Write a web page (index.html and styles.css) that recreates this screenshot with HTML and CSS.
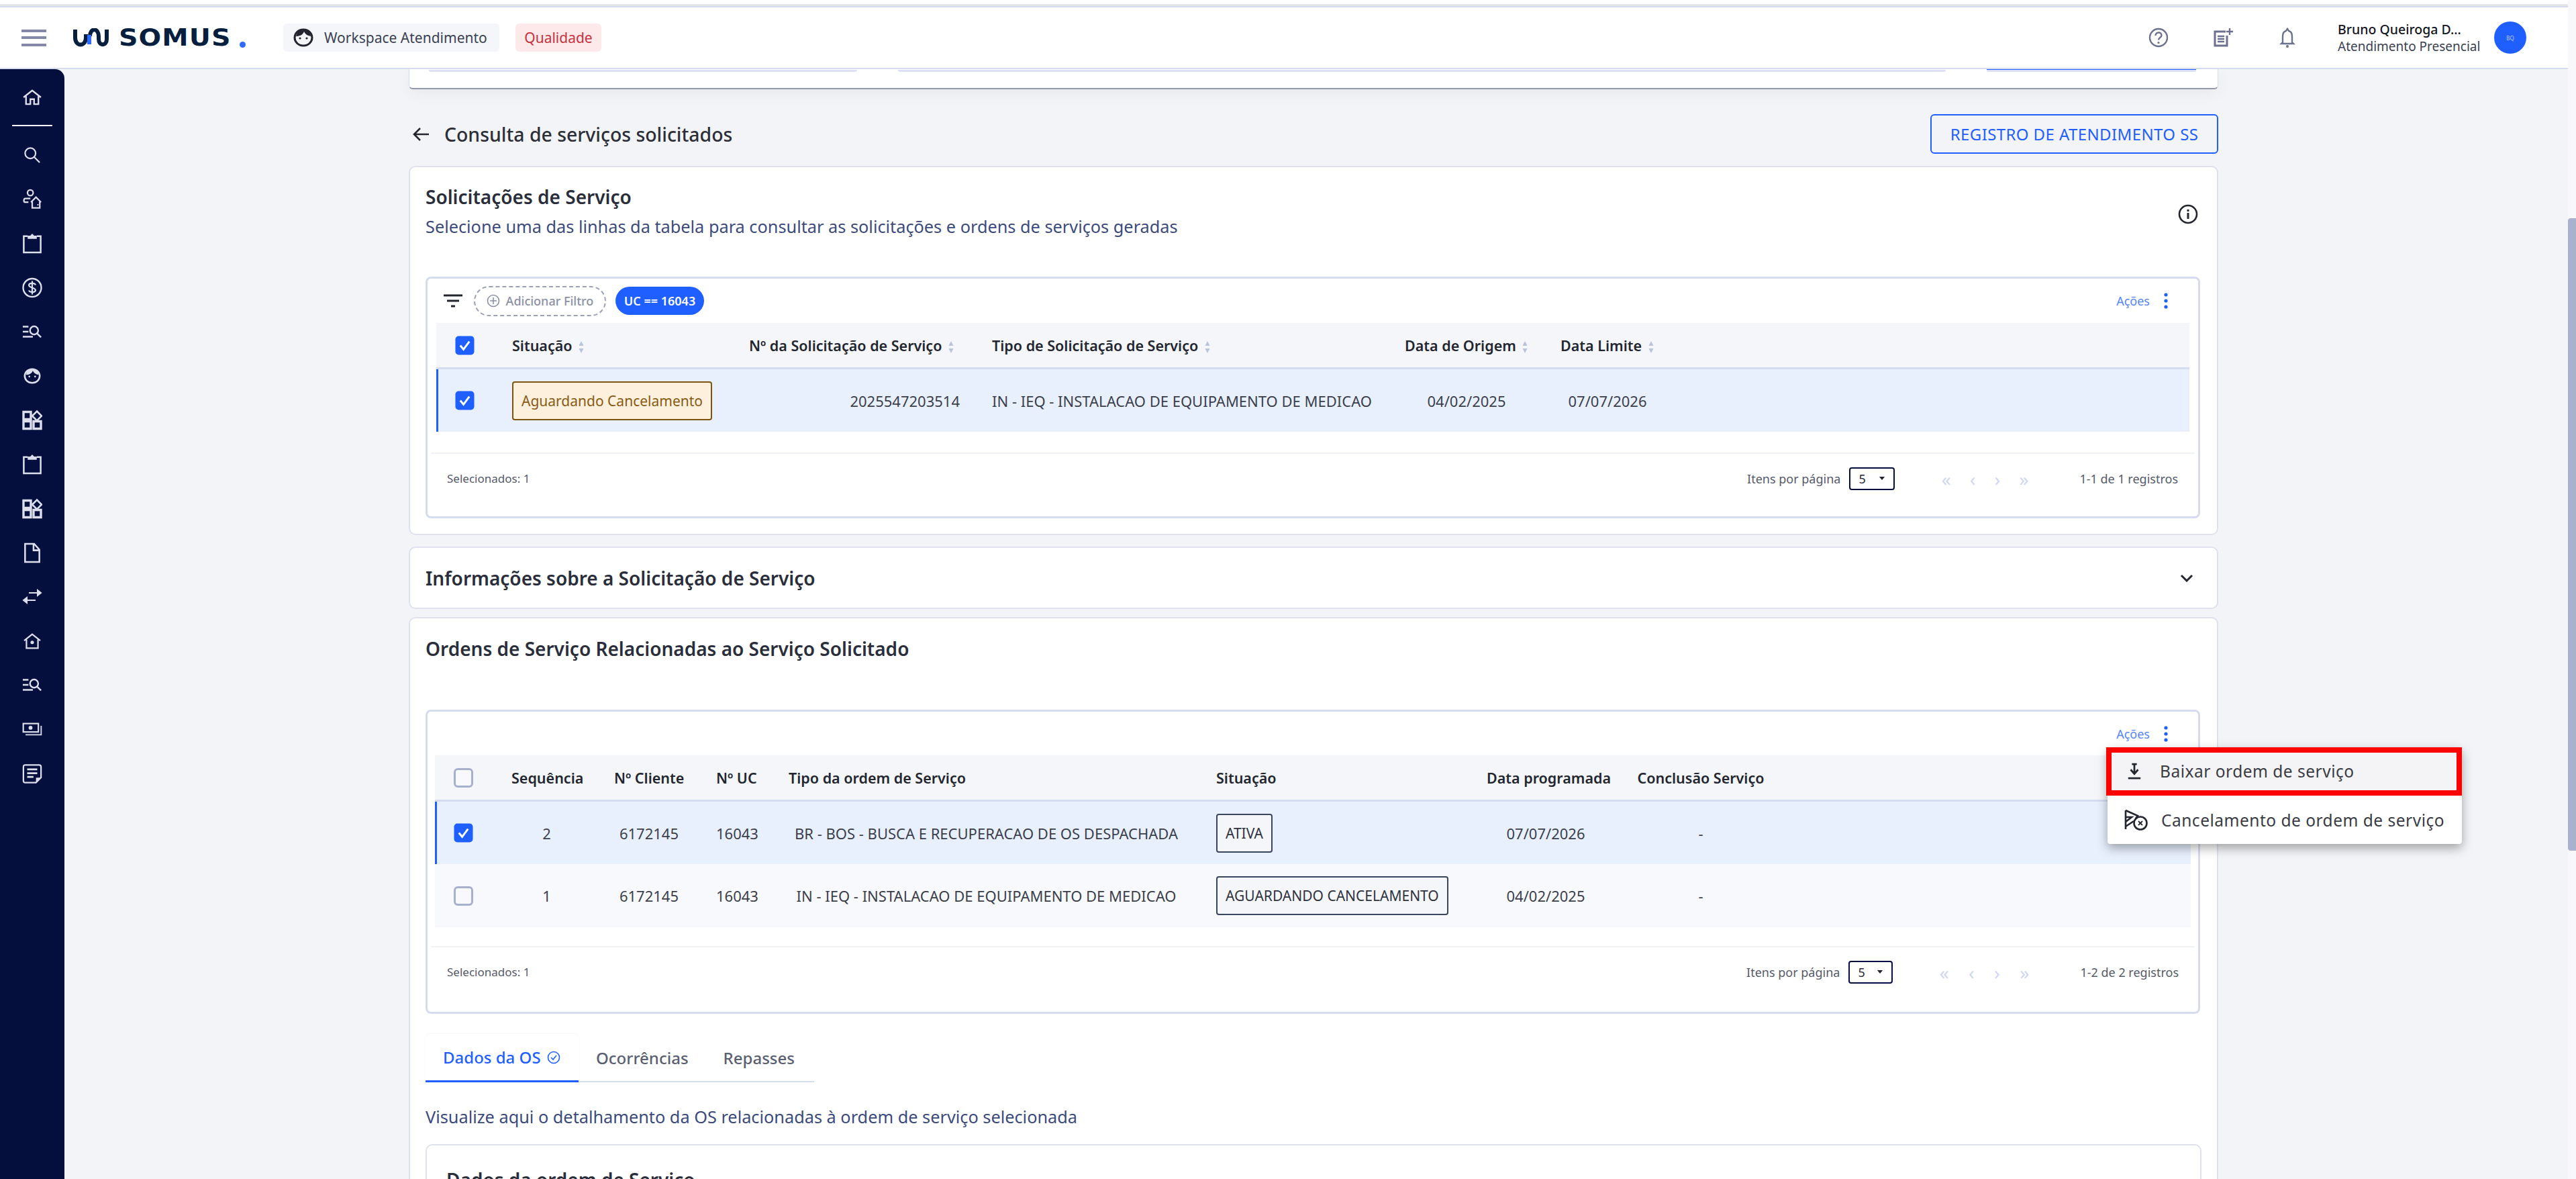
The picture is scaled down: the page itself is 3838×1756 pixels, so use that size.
FILE: index.html
```html
<!DOCTYPE html>
<html lang="pt-BR">
<head>
    <meta charset="UTF-8">
    <title>Somus - Consulta de serviços solicitados</title>
    <link rel="stylesheet" href="styles.css">
</head>
<body>
    <svg class="defs" width="0" height="0">
        <symbol id="i-clip" viewBox="0 0 30 32"><path d="M8 5H2v25h26V5h-6" fill="none" stroke="currentColor" stroke-width="2.6"/><path d="M8 9V4h4l3-3 3 3h4v5z" fill="currentColor"/></symbol>
        <symbol id="i-apps" viewBox="0 0 30 30"><path d="M2 3h11v11H2zM2 17h11v11H2zM17 17h11v11H17z" fill="none" stroke="currentColor" stroke-width="3.4"/><path d="M22 2l7 7-7 7-7-7z" fill="none" stroke="currentColor" stroke-width="2.6"/></symbol>
        <symbol id="i-lists" viewBox="0 0 32 22"><path d="M1 3h9M1 11h9M1 19h16" stroke="currentColor" stroke-width="2.6" fill="none"/><circle cx="19" cy="9" r="6.5" fill="none" stroke="currentColor" stroke-width="2.6"/><path d="M24 14l6 6" stroke="currentColor" stroke-width="2.6"/></symbol>
        <symbol id="i-face" viewBox="0 0 30 28"><path d="M15 2C7 2 2 8 2 14s5 12 13 12 13-6 13-12S23 2 15 2z" fill="none" stroke="currentColor" stroke-width="3"/><path d="M4 12c6 0 10-2 12-7 2 4 5 6 10 7l-1-6-6-4h-8L6 6z" fill="currentColor"/><circle cx="10" cy="15" r="1.6" fill="currentColor"/><circle cx="20" cy="15" r="1.6" fill="currentColor"/></symbol>
        <symbol id="i-sort" viewBox="0 0 8 20"><path d="M4 1l3.500 7H.5zM4 19l3.500-7H.5z" fill="currentColor"/></symbol>
        <symbol id="i-dots" viewBox="0 0 6 24"><circle cx="3" cy="3" r="2.6" fill="currentColor"/><circle cx="3" cy="12" r="2.6" fill="currentColor"/><circle cx="3" cy="21" r="2.6" fill="currentColor"/></symbol>
        <symbol id="i-check" viewBox="0 0 30 30"><rect width="29" height="29" x="0.5" y="0.5" rx="5" fill="currentColor"/><path d="M8 15l5 6 9-12" fill="none" stroke="#fff" stroke-width="3"/></symbol>
        <symbol id="i-caret" viewBox="0 0 12 8"><path d="M1 1h10L6 7z" fill="currentColor"/></symbol>
    </svg>

    <div class="shell">
        <div class="page">
            <div class="strip"></div>
            <header class="topbar">
                <button class="burger"><span></span><span></span><span></span></button>
                <div class="logo">
                    <svg class="logo-mark" viewBox="0 0 54 28"><path d="M4 2v12c0 14 16 14 16 0V9" fill="none" stroke="#071f3f" stroke-width="6"/><path d="M26 12c0-13 13-13 13 0v4c0 11 12 11 12 0V2" fill="none" stroke="#071f3f" stroke-width="6"/><path d="M25 10v14" stroke="#2f6bff" stroke-width="6"/></svg>
                    <span class="logo-word">SOMUS</span>
                    <span class="logo-dot"></span>
                </div>
                <div class="chip chip-work">
                    <svg class="chip-icon"><use href="#i-face"/></svg>
                    Workspace Atendimento
                </div>
                <div class="chip chip-qual">Qualidade</div>
                <div class="top-actions">
                    <svg class="top-icon" viewBox="0 0 30 30"><circle cx="15" cy="15" r="13" fill="none" stroke="currentColor" stroke-width="2.4"/><path d="M10.5 12c0-6 9-6 9-.5 0 3.500-4.500 3.500-4.500 7" fill="none" stroke="currentColor" stroke-width="2.4"/><circle cx="15" cy="22.500" r="1.600" fill="currentColor"/></svg>
                    <svg class="top-icon" viewBox="0 0 30 30"><path d="M19 6H3v21h18V12" fill="none" stroke="currentColor" stroke-width="3"/><path d="M7 13h10M7 17h10M7 21h10" stroke="currentColor" stroke-width="2.400"/><path d="M25 1v10M20 6h10" stroke="currentColor" stroke-width="2.400"/></svg>
                    <svg class="top-icon" viewBox="0 0 30 30"><path d="M15 2l2 3c4 1 5 4 5 8v9l2 2H6l2-2v-9c0-4 1-7 5-8z" fill="none" stroke="currentColor" stroke-width="2.400"/><circle cx="15" cy="28" r="2" fill="currentColor"/></svg>
                </div>
                <div class="user">
                    <div class="user-name">Bruno Queiroga D...</div>
                    <div class="user-role">Atendimento Presencial</div>
                </div>
                <div class="avatar">BQ</div>
            </header>

            <div class="body">
                <nav class="sidebar">
                    <div class="nav-home">
                        <svg class="nav-icon" viewBox="0 0 30 26"><path d="M1 13L15 2l14 11M5 11v13h7v-8h6v8h7V11" fill="none" stroke="currentColor" stroke-width="2.600"/></svg>
                    </div>
                    <div class="nav-line"></div>
                    <div class="nav-item"><svg class="nav-icon" viewBox="0 0 28 26"><circle cx="11" cy="10" r="8.500" fill="none" stroke="currentColor" stroke-width="2.400"/><path d="M17 16l9 9" stroke="currentColor" stroke-width="2.400"/></svg></div>
                    <div class="nav-item"><svg class="nav-icon nav-tall" viewBox="0 0 32 32"><circle cx="13" cy="6" r="4.500" fill="none" stroke="currentColor" stroke-width="2.400"/><path d="M13 15H5c-3 0-3 6 0 6h5" fill="none" stroke="currentColor" stroke-width="2.400"/><path d="M14 21l8-8 8 8M16 20v10h12V20" fill="none" stroke="currentColor" stroke-width="2.400"/><rect x="24" y="24" width="2" height="2" fill="currentColor"/></svg></div>
                    <div class="nav-item"><svg class="nav-icon nav-tall"><use href="#i-clip"/></svg></div>
                    <div class="nav-item"><svg class="nav-icon nav-tall" viewBox="0 0 30 30"><circle cx="15" cy="15" r="13.500" fill="none" stroke="currentColor" stroke-width="2.400"/><path d="M20 11c-1-3-9-4-10 0 0 5 10 3 10 8-1 4-9 3-10 0M15 5v20" fill="none" stroke="currentColor" stroke-width="2.200"/></svg></div>
                    <div class="nav-item"><svg class="nav-icon"><use href="#i-lists"/></svg></div>
                    <div class="nav-item"><svg class="nav-icon"><use href="#i-face"/></svg></div>
                    <div class="nav-item"><svg class="nav-icon nav-tall"><use href="#i-apps"/></svg></div>
                    <div class="nav-item"><svg class="nav-icon nav-tall"><use href="#i-clip"/></svg></div>
                    <div class="nav-item"><svg class="nav-icon nav-tall"><use href="#i-apps"/></svg></div>
                    <div class="nav-item"><svg class="nav-icon nav-tall" viewBox="0 0 26 32"><path d="M2 2h14l8 9v19H2zM15 2v10h9" fill="none" stroke="currentColor" stroke-width="2.600"/></svg></div>
                    <div class="nav-item"><svg class="nav-icon" viewBox="0 0 30 22"><path d="M10 5h18M23 1l5 4-5 4z" fill="currentColor" stroke="currentColor" stroke-width="2"/><path d="M20 16H2M7 12l-5 4 5 4z" fill="currentColor" stroke="currentColor" stroke-width="2"/></svg></div>
                    <div class="nav-item"><svg class="nav-icon" viewBox="0 0 30 28"><path d="M1 13L15 2l14 11M5 11v15h20V11" fill="none" stroke="currentColor" stroke-width="2.600"/><circle cx="15" cy="16" r="3" fill="currentColor"/></svg></div>
                    <div class="nav-item"><svg class="nav-icon"><use href="#i-lists"/></svg></div>
                    <div class="nav-item"><svg class="nav-icon" viewBox="0 0 36 24"><rect x="2" y="2" width="27" height="15" fill="none" stroke="currentColor" stroke-width="2.600"/><circle cx="15" cy="9.500" r="3.500" fill="currentColor"/><path d="M6 22h28V6" fill="none" stroke="currentColor" stroke-width="2.200"/></svg></div>
                    <div class="nav-item"><svg class="nav-icon nav-tall" viewBox="0 0 32 32"><path d="M22 30H5c-2 0-3-1-3-3V5c0-2 1-3 3-3h22c2 0 3 1 3 3v17z" fill="none" stroke="currentColor" stroke-width="2.400"/><path d="M8 9h16M8 15h16M8 21h10" stroke="currentColor" stroke-width="3"/><path d="M22 22h8l-8 8z" fill="currentColor"/></svg></div>
                </nav>

                <main class="main">
                    <div class="stub-card">
                        <div class="stub-input stub-a"></div>
                        <div class="stub-input stub-b"></div>
                        <div class="stub-input stub-btn"></div>
                    </div>

                    <div class="page-head">
                        <div class="page-title">
                            <svg class="back-icon" viewBox="0 0 26 22"><path d="M25 11H3M12 2l-9 9 9 9" fill="none" stroke="currentColor" stroke-width="2.600"/></svg>
                            Consulta de serviços solicitados
                        </div>
                        <button class="btn-outline">REGISTRO DE ATENDIMENTO SS</button>
                    </div>

                    <section class="card card-requests">
                        <div class="card-head">
                            <div>
                                <h2 class="card-title">Solicitações de Serviço</h2>
                                <p class="card-sub">Selecione uma das linhas da tabela para consultar as solicitações e ordens de serviços geradas</p>
                            </div>
                            <svg class="info-icon" viewBox="0 0 30 30"><circle cx="15" cy="15" r="13" fill="none" stroke="currentColor" stroke-width="2.600"/><path d="M15 13v9M15 8v3" stroke="currentColor" stroke-width="3"/></svg>
                        </div>

                        <div class="tbl-card tbl-one">
                            <div class="tbl-tools">
                                <svg class="filter-icon" viewBox="0 0 28 20"><path d="M0 2h28M5 10h18M11 18h6" stroke="currentColor" stroke-width="3"/></svg>
                                <div class="filter-add">
                                    <svg class="plus-icon" viewBox="0 0 20 20"><circle cx="10" cy="10" r="8.500" fill="none" stroke="currentColor" stroke-width="1.600"/><path d="M10 5v10M5 10h10" stroke="currentColor" stroke-width="1.600"/></svg>
                                    Adicionar Filtro
                                </div>
                                <div class="filter-chip">UC == 16043</div>
                                <div class="actions">Ações <svg class="dots-icon"><use href="#i-dots"/></svg></div>
                            </div>
                            <div class="row row-head">
                                <div class="cell-check"><svg class="check on"><use href="#i-check"/></svg></div>
                                <div>Situação <svg class="sort"><use href="#i-sort"/></svg></div>
                                <div>Nº da Solicitação de Serviço <svg class="sort"><use href="#i-sort"/></svg></div>
                                <div>Tipo de Solicitação de Serviço <svg class="sort"><use href="#i-sort"/></svg></div>
                                <div>Data de Origem <svg class="sort"><use href="#i-sort"/></svg></div>
                                <div>Data Limite <svg class="sort"><use href="#i-sort"/></svg></div>
                            </div>
                            <div class="row row-selected">
                                <div class="cell-check"><svg class="check on"><use href="#i-check"/></svg></div>
                                <div><span class="badge badge-warn">Aguardando Cancelamento</span></div>
                                <div class="cell-right">2025547203514</div>
                                <div>IN - IEQ - INSTALACAO DE EQUIPAMENTO DE MEDICAO</div>
                                <div class="cell-center">04/02/2025</div>
                                <div class="cell-center">07/07/2026</div>
                            </div>
                            <div class="tbl-foot">
                                <span class="selected-count">Selecionados: 1</span>
                                <span class="per-page">Itens por página</span>
                                <div class="select">5 <svg class="caret"><use href="#i-caret"/></svg></div>
                                <div class="pager"><span>«</span><span>‹</span><span>›</span><span>»</span></div>
                                <span class="range">1-1 de 1 registros</span>
                            </div>
                        </div>
                    </section>

                    <section class="card card-info">
                        <h2 class="card-title">Informações sobre a Solicitação de Serviço</h2>
                        <svg class="chevron" viewBox="0 0 20 12"><path d="M2 2l8 8 8-8" fill="none" stroke="currentColor" stroke-width="3"/></svg>
                    </section>

                    <section class="card card-orders">
                        <h2 class="card-title title-orders">Ordens de Serviço Relacionadas ao Serviço Solicitado</h2>

                        <div class="tbl-card tbl-two">
                            <div class="tbl-tools">
                                <div class="actions">Ações <svg class="dots-icon"><use href="#i-dots"/></svg></div>
                            </div>
                            <div class="row row-head">
                                <div class="cell-check"><span class="check off"></span></div>
                                <div>Sequência</div>
                                <div>Nº Cliente</div>
                                <div>Nº UC</div>
                                <div>Tipo da ordem de Serviço</div>
                                <div>Situação</div>
                                <div>Data programada</div>
                                <div>Conclusão Serviço</div>
                            </div>
                            <div class="row row-selected">
                                <div class="cell-check"><svg class="check on"><use href="#i-check"/></svg></div>
                                <div class="cell-center">2</div>
                                <div class="cell-center">6172145</div>
                                <div class="cell-center">16043</div>
                                <div class="cell-center">BR - BOS - BUSCA E RECUPERACAO DE OS DESPACHADA</div>
                                <div><span class="badge">ATIVA</span></div>
                                <div class="cell-center">07/07/2026</div>
                                <div class="cell-center">-</div>
                            </div>
                            <div class="row row-plain">
                                <div class="cell-check"><span class="check off"></span></div>
                                <div class="cell-center">1</div>
                                <div class="cell-center">6172145</div>
                                <div class="cell-center">16043</div>
                                <div class="cell-center">IN - IEQ - INSTALACAO DE EQUIPAMENTO DE MEDICAO</div>
                                <div><span class="badge">AGUARDANDO CANCELAMENTO</span></div>
                                <div class="cell-center">04/02/2025</div>
                                <div class="cell-center">-</div>
                            </div>
                            <div class="tbl-foot">
                                <span class="selected-count">Selecionados: 1</span>
                                <span class="per-page">Itens por página</span>
                                <div class="select">5 <svg class="caret"><use href="#i-caret"/></svg></div>
                                <div class="pager"><span>«</span><span>‹</span><span>›</span><span>»</span></div>
                                <span class="range">1-2 de 2 registros</span>
                            </div>
                        </div>

                        <div class="tabs">
                            <div class="tab tab-active">
                                Dados da OS
                                <svg class="tab-check" viewBox="0 0 20 20"><circle cx="10" cy="10" r="8.500" fill="none" stroke="currentColor" stroke-width="1.600"/><path d="M6 10l3 3 5-6" fill="none" stroke="currentColor" stroke-width="1.600"/></svg>
                            </div>
                            <div class="tab">Ocorrências</div>
                            <div class="tab">Repasses</div>
                        </div>
                        <p class="card-sub tab-desc">Visualize aqui o detalhamento da OS relacionadas à ordem de serviço selecionada</p>

                        <div class="inner-card">
                            <h2 class="card-title">Dados da ordem de Serviço</h2>
                        </div>
                    </section>

                    <!-- menu aberto de Ações, por cima da tabela -->
                    <div class="menu">
                        <div class="menu-item menu-mark">
                            <svg class="menu-icon" viewBox="0 0 24 26"><path d="M12 1v14M6 10l6 7 6-7M8 1h8" fill="none" stroke="currentColor" stroke-width="3"/><path d="M2 24h20" stroke="currentColor" stroke-width="3"/></svg>
                            Baixar ordem de serviço
                        </div>
                        <div class="menu-item">
                            <svg class="menu-icon menu-icon-wide" viewBox="0 0 36 32"><path d="M2 2l18 8-3 4M2 26l12-8M2 12h9l-9 7zM2 30V2" fill="none" stroke="currentColor" stroke-width="2.600"/><circle cx="24" cy="21" r="9.500" fill="#fff" stroke="currentColor" stroke-width="2.600"/><path d="M21 18l6 6M27 18l-6 6" stroke="currentColor" stroke-width="1.800"/></svg>
                            Cancelamento de ordem de serviço
                        </div>
                    </div>
                </main>
            </div>
        </div>
        <div class="scrollbar"><div class="thumb"></div></div>
    </div>
</body>
</html>
```

FILE: styles.css
```css
:root {
    --azul: #1f5fff;
    --azul-claro: #e8f0fe;
    --navy: #040f3d;
    --borda: #d6dcf0;
    --texto: #2b2f3a;
    --sub: #3c4a7c;
    --fundo: #f3f4f7;
}

* { box-sizing: border-box; }

html, body {
    height: 100%;
    margin: 0;
    overflow: hidden;
}
body {
    font-family: "Noto Sans", Roboto, sans-serif;
    color: var(--texto);
    background: var(--fundo);
}
.defs { position: absolute; }

.shell { display: flex; height: 1756px; }
.page { flex: 1; min-width: 0; display: flex; flex-direction: column; }
.scrollbar {
    width: 12px;
    padding-top: 325px;
    background: #f8f8fa;
}
.thumb { height: 942px; background: #a9b1cf; border-radius: 4px 0 0 4px; }

.strip {
    height: 9px;
    background: #fff;
    border-top: 4px solid #fff;
    box-shadow: inset 0 -3px 0 #e4e5e8;
}

/* header */
.topbar {
    position: relative;
    z-index: 3;
    height: 94px;
    flex: none;
    display: flex;
    align-items: center;
    padding-left: 32px;
    background: #fff;
    border-top: 2px solid var(--borda);
    border-bottom: 2px solid var(--borda);
}
.burger {
    width: 37px;
    height: 25px;
    margin-right: 39px;
    padding: 0;
    border: 0;
    background: none;
    display: flex;
    flex-direction: column;
    justify-content: space-between;
}
.burger span { height: 4px; background: #8489a9; }
.logo { display: flex; align-items: center; width: 314px; }
.logo-mark { width: 54px; height: 28px; margin-right: 15px; }
.logo-word {
    width: 167px;
    font-family: "DejaVu Sans", sans-serif;
    font-weight: 700;
    font-size: 35px;
    line-height: 1;
    letter-spacing: 1px;
    color: #071f3f;
    transform: scaleX(1.13);
    transform-origin: left center;
}
.logo-dot {
    width: 9px;
    height: 9px;
    margin: 20px 0 0 13px;
    border-radius: 50%;
    background: #2f6bff;
}
.chip {
    height: 42px;
    display: flex;
    align-items: center;
    border-radius: 6px;
    font-size: 21px;
}
.chip-work {
    width: 322px;
    padding-left: 15px;
    margin-right: 24px;
    background: #f4f6fa;
    color: #3b4252;
}
.chip-icon { width: 30px; height: 28px; margin-right: 16px; color: #23262f; }
.chip-qual {
    width: 128px;
    justify-content: center;
    background: #fde8ea;
    color: #c8323c;
}
.top-actions {
    margin-left: auto;
    display: flex;
    gap: 66px;
    margin-right: 60px;
    color: #6c7190;
}
.top-icon { width: 30px; height: 30px; }
.user { width: 233px; }
.user-name { font-size: 19.5px; font-weight: 500; color: #15171f; line-height: 26px; }
.user-role { font-size: 19px; color: #3b4252; line-height: 24px; }
.avatar {
    width: 48px;
    height: 48px;
    margin-right: 62px;
    border-radius: 50%;
    background: var(--azul);
    color: #b9ccff;
    font-size: 8px;
    display: flex;
    align-items: center;
    justify-content: center;
}

/* layout */
.body { flex: 1; min-height: 0; display: flex; }
.sidebar {
    width: 96px;
    flex: none;
    background: var(--navy);
    border-top-right-radius: 14px;
    color: #dcdfeb;
    padding-top: 26px;
}
.nav-home { height: 32px; display: flex; justify-content: center; align-items: center; }
.nav-line { height: 2px; margin: 25px 18px 10px; background: #fff; }
.nav-item { height: 65.8px; display: flex; justify-content: center; align-items: center; }
.nav-icon { width: 30px; height: 24px; }
.nav-tall { height: 31px; }

.main {
    position: relative;
    flex: 1;
    min-width: 0;
    padding-left: 513px;
}

/* card cortado pelo header */
.stub-card {
    width: 2696px;
    height: 30px;
    display: flex;
    padding-left: 29px;
    background: #fff;
    border: 1px solid var(--borda);
    border-top: 0;
    border-bottom: 2px solid #9497a6;
    box-shadow: 0 6px 22px rgba(0, 0, 0, .05);
    border-radius: 0 0 6px 6px;
}
.stub-input { height: 4px; border-bottom: 3px solid #dde0f5; border-radius: 0 0 3px 3px; }
.stub-a { width: 638px; margin-right: 61px; }
.stub-b { width: 1561px; margin-right: 61px; }
.stub-btn { width: 312px; background: var(--azul); border-bottom-color: #dde0f5; }

.page-head {
    width: 2696px;
    height: 59px;
    margin-top: 37px;
    display: flex;
    align-items: center;
    justify-content: space-between;
}
.page-title {
    display: flex;
    align-items: center;
    font-size: 28.4px;
    font-weight: 500;
    color: #2c2f38;
    padding-left: 5px;
}
.back-icon { width: 26px; height: 22px; margin-right: 22px; color: #23262f; }
.btn-outline {
    width: 429px;
    height: 59px;
    border: 2px solid var(--azul);
    border-radius: 6px;
    background: transparent;
    color: var(--azul);
    font-family: inherit;
    font-size: 24px;
    letter-spacing: .4px;
    white-space: nowrap;
    padding: 0;
}

.card {
    width: 2696px;
    background: #fff;
    border: 2px solid #dfe2ee;
    border-radius: 10px;
    padding: 0 23px;
}
.card-title {
    margin: 0;
    font-size: 28px;
    font-weight: 600;
    line-height: 32px;
    color: #2a2e3a;
}
.card-sub {
    margin: 0;
    font-size: 25.3px;
    line-height: 30px;
    color: var(--sub);
}
.card-requests { height: 550px; margin-top: 18px; }
.card-head {
    display: flex;
    justify-content: space-between;
    align-items: flex-start;
    padding: 28px 0 0;
    height: 163px;
}
.card-head .card-title { margin-bottom: 13px; }
.info-icon { width: 30px; height: 30px; margin: 27px 5px 0 0; color: #23262f; }

.tbl-card {
    width: 2644px;
    background: #fff;
    border: 3px solid var(--borda);
    border-radius: 8px;
}
.tbl-one { height: 360px; }
.tbl-tools {
    height: 66px;
    display: flex;
    align-items: center;
    padding-left: 24px;
}
.filter-icon { width: 28px; height: 20px; margin-right: 17px; color: #23262f; }
.filter-add {
    width: 197px;
    height: 45px;
    margin-right: 14px;
    display: flex;
    align-items: center;
    justify-content: center;
    gap: 9px;
    border: 2px dashed #9da1b5;
    border-radius: 24px;
    font-size: 18px;
    font-weight: 500;
    color: #8b90a7;
}
.plus-icon { width: 20px; height: 20px; }
.filter-chip {
    width: 132px;
    height: 42px;
    display: flex;
    align-items: center;
    justify-content: center;
    border-radius: 21px;
    background: var(--azul);
    color: #fff;
    font-size: 18px;
    font-weight: 600;
}
.actions {
    margin-left: auto;
    margin-right: 45px;
    display: flex;
    align-items: center;
    gap: 21px;
    font-size: 18px;
    color: #5585f6;
}
.dots-icon { width: 6px; height: 24px; color: var(--azul); }

.row {
    display: grid;
    align-items: center;
    column-gap: 48px;
    font-size: 22px;
    color: #3b3f4a;
    white-space: nowrap;
}
.tbl-one .row { grid-template-columns: 65px 305px 314px 567px 184px 140px; margin: 0 13px; }
.tbl-two .row { grid-template-columns: 66px 105px 104px 60px 589px 355px 176px 190px; margin: 0 11px; }
.row-head {
    height: 69px;
    background: #f4f6fa;
    border-bottom: 3px solid var(--borda);
    font-size: 21.5px;
    font-weight: 600;
    color: #23262f;
}
.row-selected { height: 93px; background: var(--azul-claro); box-shadow: inset 3px 0 0 var(--azul); }
.row-plain { height: 94px; background: #f8f9fc; }
.tbl-two .row-head > div:nth-child(-n+4) { text-align: center; }
.tbl-two .row-head > div:nth-child(7), .tbl-two .row-head > div:nth-child(8) { text-align: center; }
.cell-check { display: flex; padding-left: 28px; }
.cell-right { text-align: right; }
.cell-center { text-align: center; }
.check { width: 29px; height: 29px; display: block; flex: none; }
.check.on { color: var(--azul); }
.check.off { border: 3px solid #a8b0d0; border-radius: 6px; background: #f8f9fc; }
.sort { width: 8px; height: 20px; margin-left: 4px; vertical-align: -4px; color: #b9c3da; }

.badge {
    display: inline-flex;
    align-items: center;
    height: 58px;
    padding: 0 12px;
    border: 2px solid #3a4560;
    border-radius: 4px;
    background: #f4f6fa;
    color: #2f333e;
    font-size: 21px;
}
.badge-warn { border-color: #7e5510; background: #fdf0dc; color: #8a5a14; }

.tbl-foot {
    height: 75px;
    margin: 31px 5px 0;
    padding: 0 25px 0 24px;
    display: flex;
    align-items: center;
    border-top: 2px solid #f1f2f7;
    font-size: 18px;
    color: #555a68;
}
.selected-count { margin-right: auto; font-size: 17px; }
.per-page { margin-right: 13px; }
.select {
    width: 68px;
    height: 34px;
    padding: 0 12px;
    display: flex;
    align-items: center;
    justify-content: space-between;
    border: 2px solid var(--navy);
    border-radius: 4px;
    color: #23262f;
}
.caret { width: 10px; height: 7px; color: #23262f; }
.pager {
    width: 130px;
    margin: 0 76px 0 69px;
    display: flex;
    justify-content: space-between;
    font-size: 28px;
    line-height: 26px;
    color: #cfd8f0;
}

.card-info {
    height: 93px;
    margin-top: 17px;
    display: flex;
    align-items: center;
    justify-content: space-between;
}
.chevron { width: 20px; height: 12px; margin-right: 12px; color: #23262f; }

.card-orders { height: 900px; margin-top: 12px; padding-top: 29px; }
.title-orders { margin-bottom: 75px; }
.tbl-two { height: 453px; }
.tbl-two .tbl-tools { height: 65px; }
.tbl-two .tbl-foot { margin-top: 28px; padding-right: 24px; }
.tbl-two .select { width: 66px; }
.tbl-two .pager { width: 134px; }

.tabs {
    width: 579px;
    height: 72px;
    margin-top: 30px;
    display: flex;
    border-bottom: 2px solid var(--borda);
}
.tab {
    display: flex;
    align-items: center;
    gap: 9px;
    padding: 0 26px;
    font-size: 24px;
    font-weight: 500;
    color: #5a6070;
}
.tab-active {
    width: 228px;
    color: var(--azul);
    border-bottom: 3px solid var(--azul);
    margin-bottom: -2px;
    border-radius: 8px 8px 0 0;
    box-shadow: 0 -1px 3px rgba(0, 0, 0, .04);
}
.tab-check { width: 20px; height: 20px; }
.tab-desc { margin-top: 36px; }
.inner-card {
    height: 120px;
    margin-top: 26px;
    width: 2646px;
    padding: 35px 29px 0;
    border: 2px solid #dfe2ee;
    border-radius: 10px;
}

/* menu de Ações */
.menu {
    position: absolute;
    top: 1010px;
    left: 3044px;
    width: 528px;
    background: #fff;
    border-radius: 4px;
    box-shadow: 0 6px 16px rgba(0, 0, 0, .35);
    font-size: 24.5px;
    color: #3a3c44;
    letter-spacing: .5px;
}
.menu-item {
    height: 72px;
    display: flex;
    align-items: center;
    padding-left: 31px;
    gap: 27px;
}
.menu-mark {
    margin-left: -2px;
    background: #f4f4f6;
    outline: 8px solid #ff0000;
    outline-offset: -8px;
    border-bottom: 1px solid var(--borda);
}
.menu-icon { width: 22px; height: 26px; color: #23262f; }
.menu-icon-wide { width: 36px; height: 32px; margin-left: -6px; margin-right: -8px; }
```
